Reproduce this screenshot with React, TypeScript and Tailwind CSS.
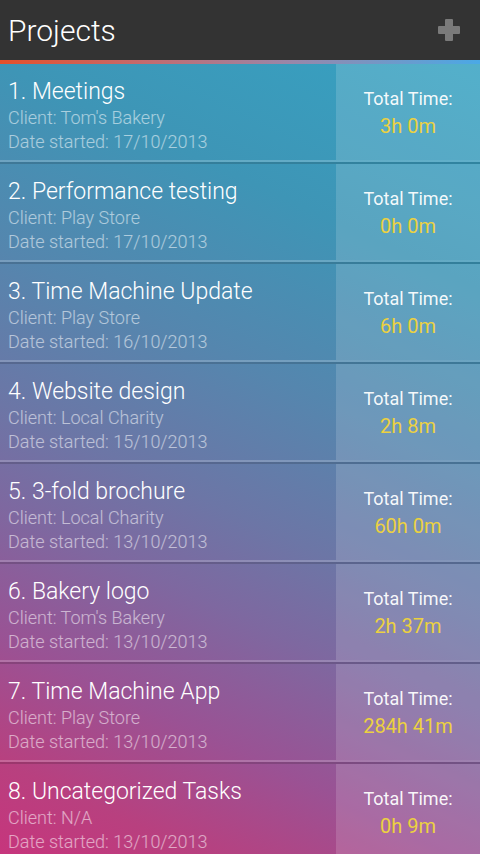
const projects = [
  { id: 1, name: 'Meetings', client: "Tom's Bakery", date: '17/10/2013', total: '3h 0m' },
  { id: 2, name: 'Performance testing', client: 'Play Store', date: '17/10/2013', total: '0h 0m' },
  { id: 3, name: 'Time Machine Update', client: 'Play Store', date: '16/10/2013', total: '6h 0m' },
  { id: 4, name: 'Website design', client: 'Local Charity', date: '15/10/2013', total: '2h 8m' },
  { id: 5, name: '3-fold brochure', client: 'Local Charity', date: '13/10/2013', total: '60h 0m' },
  { id: 6, name: 'Bakery logo', client: "Tom's Bakery", date: '13/10/2013', total: '2h 37m' },
  { id: 7, name: 'Time Machine App', client: 'Play Store', date: '13/10/2013', total: '284h 41m' },
  { id: 8, name: 'Uncategorized Tasks', client: 'N/A', date: '13/10/2013', total: '0h 9m' },
];

function PlusIcon() {
  return (
    <svg width="24" height="24" viewBox="0 0 24 24" className="text-[#7a7a7a]">
      <rect x="8" y="1" width="8" height="22" rx="1" fill="currentColor" />
      <rect x="1" y="8" width="22" height="8" rx="1" fill="currentColor" />
    </svg>
  );
}

export default function App() {
  return (
    <div className="flex h-[854px] w-[480px] flex-col overflow-hidden font-['Roboto',sans-serif]">
      <header className="flex h-[60px] shrink-0 items-center justify-between bg-[#333333] pl-[8px] pr-[19px]">
        <h1 className="text-[30px] font-light text-white">Projects</h1>
        <PlusIcon />
      </header>
      <div className="h-[4px] shrink-0 bg-[linear-gradient(90deg,#e5502a_0%,#c46a6e_30%,#9a86a8_60%,#4aa9e6_100%)]" />

      <div className="flex-1 bg-[linear-gradient(205deg,#36a2c2_0%,#3e95b6_22%,#5586ae_40%,#6c76a6_55%,#7e68a0_65%,#9a5294_78%,#b8407f_90%,#c8347c_100%)]">
        {projects.map((p) => (
          <div
            key={p.id}
            className="flex h-[100px] border-b-2 border-b-black/15 shadow-[inset_0_-2px_0_rgba(255,255,255,0.2)]"
          >
            <div className="flex-1 pl-[8px] pt-[14px] font-light">
              <div className="text-[23px] leading-[27px] text-white">
                {p.id}. {p.name}
              </div>
              <div className="mt-[1px] text-[18px] leading-[24px] text-white/55">
                Client: {p.client}
              </div>
              <div className="text-[18px] leading-[24px] text-white/55">
                Date started: {p.date}
              </div>
            </div>
            <div className="flex h-[96px] w-[144px] flex-col items-center justify-center bg-white/15 pt-[2px]">
              <div className="text-[18px] leading-[27px] text-white/95">Total Time:</div>
              <div className="text-[20px] leading-[29px] text-[#ecd140]">{p.total}</div>
            </div>
          </div>
        ))}
      </div>
    </div>
  );
}
